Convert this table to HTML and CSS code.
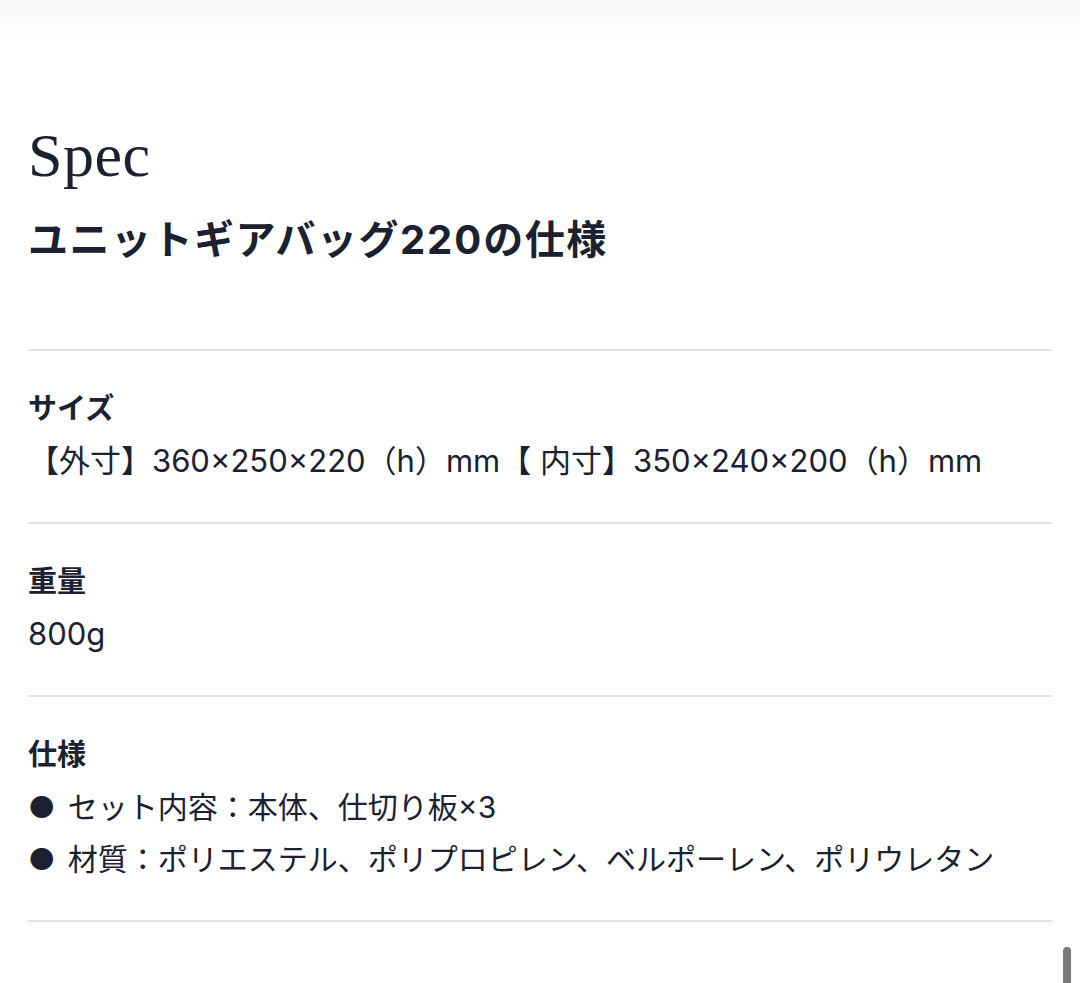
FILE: index.html
```html
<!DOCTYPE html>
<html lang="ja">
<head>
<meta charset="utf-8">
<title>Spec</title>
<link rel="stylesheet" href="styles.css">
</head>
<body>
<div class="top-shade"></div>
<main class="spec">
  <h1 class="spec-en">Spec</h1>
  <h2 class="spec-title">ユニットギアバッグ<span class="num">220</span>の仕様</h2>
  <section class="spec-row">
    <h3 class="spec-label">サイズ</h3>
    <p class="spec-value">【外寸】360×250×220（h）mm【 内寸】350×240×200（h）mm</p>
  </section>
  <section class="spec-row">
    <h3 class="spec-label">重量</h3>
    <p class="spec-value">800g</p>
  </section>
  <section class="spec-row spec-row-last">
    <h3 class="spec-label">仕様</h3>
    <p class="spec-value spec-bullet">● セット内容：本体、仕切り板×3</p>
    <p class="spec-value spec-bullet">● 材質：ポリエステル、ポリプロピレン、ベルポーレン、ポリウレタン</p>
  </section>
</main>
<div class="scroll-thumb"></div>
</body>
</html>
```
FILE: styles.css
```css
html, body {
  margin: 0;
  padding: 0;
  background: #ffffff;
}
body {
  width: 1080px;
  height: 983px;
  overflow: hidden;
  position: relative;
  color: #1b2130;
  font-family: Inter, "Noto Sans CJK JP", sans-serif;
}
.top-shade {
  height: 40px;
  background: linear-gradient(to bottom, #f7f7f7, #ffffff);
}
.spec {
  padding: 0 28px;
}
.spec-en {
  margin: 83px 0 0 0;
  font-family: "Liberation Serif", serif;
  font-weight: 400;
  font-size: 62px;
  line-height: 64px;
  letter-spacing: 0.5px;
}
.spec-title {
  margin: 25px 0 0 0;
  font-size: 40px;
  line-height: 56px;
  font-weight: 700;
  letter-spacing: 1.5px;
  padding-bottom: 81px;
}
.spec-title .num {
  letter-spacing: 2px;
}
.spec-row {
  border-top: 2px solid #e2e2e2;
  padding: 32px 0 35px 0;
}
.spec-row-last {
  border-bottom: 2px solid #e2e2e2;
}
.spec-label {
  margin: 0;
  font-size: 29px;
  line-height: 52px;
  font-weight: 700;
}
.spec-value {
  margin: 0;
  font-size: 31px;
  line-height: 52px;
  font-weight: 400;
}
.spec-bullet {
  font-size: 30px;
  word-spacing: 4px;
}
.scroll-thumb {
  position: absolute;
  right: 9px;
  top: 947px;
  width: 8px;
  height: 50px;
  border-radius: 4px;
  background: #7a7a7a;
}
```
